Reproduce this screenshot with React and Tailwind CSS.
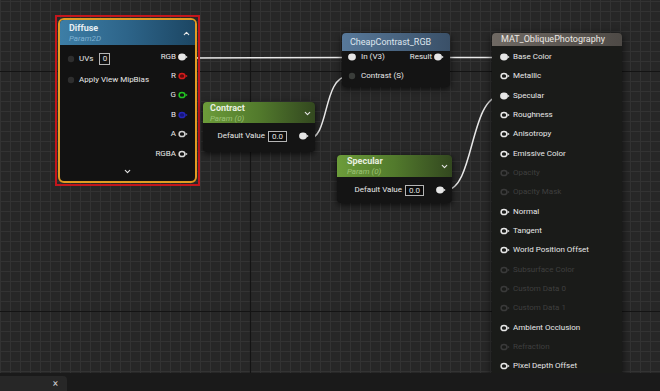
import React from 'react';
import { ChevronUp, ChevronDown } from 'lucide-react';

const FONT = "font-['Roboto','Liberation_Sans',sans-serif]";

// pin glyph: circle + little arrow nub on the right
const Pin = ({ kind = 'ring', color = '#e6e6e6', fill = 'none', nub = true }) => (
  <svg width="10" height="8" viewBox="0 0 10 8" className="shrink-0">
    {kind === 'filled' && <ellipse cx="4" cy="4" rx="3.9" ry="3.4" fill={color} />}
    {kind === 'ring' && <ellipse cx="4" cy="4" rx="2.9" ry="2.6" fill={fill} stroke={color} strokeWidth="1.5" />}
    {kind === 'dot' && <circle cx="4" cy="4" r="3.2" fill={color} />}
    {nub && <path d="M7.6 2.4 L9.6 4 L7.6 5.6 Z" fill={color} />}
  </svg>
);

const MAT_PINS = [
  ['Base Color', 'filled'], ['Metallic', 'ring'], ['Specular', 'filled'], ['Roughness', 'ring'],
  ['Anisotropy', 'ring'], ['Emissive Color', 'ring'], ['Opacity', 'dim'], ['Opacity Mask', 'dim'],
  ['Normal', 'ring'], ['Tangent', 'ring'], ['World Position Offset', 'ring'], ['Subsurface Color', 'dim'],
  ['Custom Data 0', 'dim'], ['Custom Data 1', 'dim'], ['Ambient Occlusion', 'ring'], ['Refraction', 'dim'],
  ['Pixel Depth Offset', 'ring'],
];

const DIFFUSE_OUT = [
  ['RGB', { kind: 'filled' }],
  ['R', { kind: 'ring', color: '#d41b1b', fill: '#5c0c0c' }],
  ['G', { kind: 'ring', color: '#22c422' }],
  ['B', { kind: 'ring', color: '#2525b8', fill: '#16167a' }],
  ['A', { kind: 'ring', color: '#cfcfcf' }],
  ['RGBA', { kind: 'ring', color: '#d8d8d8' }],
];

const ValueBox = ({ children }) => (
  <div className="w-[19px] h-[11px] border border-[#b5b5b5] bg-[#0c0c0c] text-[8px] leading-[9px] text-[#e0e0e0] text-center">{children}</div>
);

const ParamNode = ({ pos, title, headerH, titlePad }) => (
  <div className={`absolute ${pos} rounded-[4px] overflow-hidden bg-[#141414] shadow-[0_2px_6px_rgba(0,0,0,0.7)] flex flex-col`}>
    <div className={`${headerH} ${titlePad} relative bg-linear-to-r from-[#6c9c3a] via-[#527a2c] to-[#33481f]`}>
      <div className="text-[9px] font-bold leading-[11px] text-[#e9f0e0]">{title}</div>
      <div className="text-[8px] italic leading-[10px] text-[#9cc276]">Param (0)</div>
      <ChevronDown size={9} strokeWidth={3} className="absolute right-[3px] top-[7px] text-[#e6e6e6]" />
    </div>
    <div className="flex items-center justify-end gap-[3px] pr-[6px] pt-[5px]">
      <span className="text-[8px] leading-[16px] text-[#e8e8e8]">Default Value</span>
      <ValueBox>0.0</ValueBox>
      <div className="w-[6px]" />
      <Pin kind="filled" />
    </div>
  </div>
);

export default function App() {
  const minor = [];
  for (let i = 0; i <= 66; i++) minor.push(<line key={'v' + i} x1={i * 10 + 0.5} y1="0" x2={i * 10 + 0.5} y2="391" />);
  for (let i = 0; i <= 40; i++) minor.push(<line key={'h' + i} x1="0" y1={i * 10 + 1.5} x2="660" y2={i * 10 + 1.5} />);

  return (
    <div className={`w-[660px] h-[391px] bg-[#181818] overflow-hidden flex flex-col ${FONT}`}>
      <div className="relative h-[373px] overflow-hidden bg-[#272727]">
        <svg className="absolute inset-0" width="660" height="373">
          <g stroke="#333333" strokeWidth="1">{minor}</g>
          <g stroke="#141414" strokeWidth="1.2">
            <line x1="0" y1="71.5" x2="660" y2="71.5" />
            <line x1="0" y1="311.5" x2="660" y2="311.5" />
            <line x1="250.5" y1="0" x2="250.5" y2="373" />
          </g>
        </svg>

        {/* wires */}
        <svg className="absolute inset-0 z-10 pointer-events-none" width="660" height="373" fill="none" stroke="#e8e8e8" strokeWidth="1.5">
          <path d="M188 58 L349 57.5" />
          <path d="M444 57.5 L501 57.5" />
          <path d="M308 139 C 330 139 322 76 349 76" />
          <path d="M446 190 C 474 190 470 96 501 96" />
        </svg>

        {/* Diffuse (selected) */}
        <div className="absolute left-[55px] top-[15px] w-[145px] h-[171px] border-2 border-[#c3161c] p-px z-20">
          <div className="h-full rounded-[6px] border-2 border-[#e29c22] overflow-hidden bg-[#121212] flex flex-col">
            <div className="h-[25px] relative pl-[9px] pt-[3px] bg-linear-to-r from-[#3d7ea6] via-[#2d6489] to-[#1c4663]">
              <div className="text-[9px] font-bold leading-[11px] text-[#e6eef3]">Diffuse</div>
              <div className="text-[8px] italic leading-[10px] text-[#7fb2d3]">Param2D</div>
              <ChevronUp size={9} strokeWidth={3} className="absolute right-[4px] top-[9px] text-[#e6e6e6]" />
            </div>
            <div className="relative flex-1 flex justify-between">
              <div className="flex flex-col shrink-0 whitespace-nowrap pt-[3px] pl-[7px]">
                <div className="h-[21px] flex items-center gap-[2px]">
                  <Pin kind="dot" color="#2e2e2e" nub={false} />
                  <span className="text-[8px] text-[#e8e8e8]">UVs</span>
                  <div className="ml-[4px] w-[11px] h-[12px] border border-[#b5b5b5] text-[8px] leading-[10px] text-center text-[#e0e0e0]">0</div>
                </div>
                <div className="h-[21px] flex items-center gap-[2px]">
                  <Pin kind="dot" color="#2e2e2e" nub={false} />
                  <span className="text-[8px] text-[#e8e8e8]">Apply View MipBias</span>
                </div>
              </div>
              <div className="flex flex-col items-end pt-[2px] pr-[7px]">
                {DIFFUSE_OUT.map(([label, p]) => (
                  <div key={label} className="h-[19.4px] flex items-center gap-[2px]">
                    <span className="text-[8px] text-[#e8e8e8]">{label}</span>
                    <Pin {...p} />
                  </div>
                ))}
              </div>
              <ChevronDown size={9} strokeWidth={3} className="absolute left-[63px] bottom-[5px] text-[#e6e6e6]" />
            </div>
          </div>
        </div>

        <ParamNode pos="left-[203px] top-[102px] w-[112px] h-[50px] z-20" title="Contract" headerH="h-[21px]" titlePad="pl-[7px] pt-[1px]" />
        <ParamNode pos="left-[337px] top-[155px] w-[115px] h-[48px] z-20" title="Specular" headerH="h-[22px]" titlePad="pl-[10px] pt-[1px]" />

        {/* CheapContrast_RGB */}
        <div className="absolute left-[342px] top-[33px] w-[108px] h-[54px] z-20 rounded-[4px] overflow-hidden bg-[#141414] shadow-[0_2px_6px_rgba(0,0,0,0.7)]">
          <div className="h-[18px] pl-[8px] flex items-center bg-linear-to-r from-[#58799a] to-[#3a5068]">
            <span className="text-[9px] leading-[11px] text-[#dfe6ee]">CheapContrast_RGB</span>
          </div>
          <div className="flex justify-between pr-[6px] pl-[6px]">
            <div className="flex flex-col gap-[7px]">
              <div className="h-[12px] flex items-center gap-[3px]">
                <Pin kind="filled" nub={false} />
                <span className="text-[8px] text-[#e8e8e8]">In (V3)</span>
              </div>
              <div className="h-[12px] flex items-center gap-[3px]">
                <Pin kind="dot" color="#3a3d3a" nub={false} />
                <span className="text-[8px] text-[#e8e8e8]">Contrast (S)</span>
              </div>
            </div>
            <div className="h-[12px] flex items-center gap-[2px]">
              <span className="text-[8px] text-[#e8e8e8]">Result</span>
              <Pin kind="filled" />
            </div>
          </div>
        </div>

        {/* MAT_ObliquePhotography */}
        <div className="absolute left-[492px] top-[33px] w-[130px] h-[360px] z-20 rounded-[4px] overflow-hidden bg-[#1a1b19] shadow-[0_2px_8px_rgba(0,0,0,0.7)]">
          <div className="h-[13px] pl-[9px] flex items-center bg-linear-to-r from-[#6f6963] to-[#4e4a46]">
            <span className="text-[9px] leading-[11px] text-[#ece8e4]">MAT_ObliquePhotography</span>
          </div>
          <div className="flex flex-col pt-[1.3px] pl-[8px]">
            {MAT_PINS.map(([label, k]) => (
              <div key={label} className="h-[19.35px] flex items-center gap-[3px]">
                {k === 'dim'
                  ? <Pin kind="ring" color="#3a3a3a" />
                  : <Pin kind={k} />}
                <span className={`text-[8px] ${k === 'dim' ? 'text-[#3f3f3f]' : 'text-[#e8e8e8]'}`}>{label}</span>
              </div>
            ))}
          </div>
        </div>
      </div>

      {/* bottom tab strip */}
      <div className="h-[18px] flex items-end bg-[#1a1a1a]">
        <div className="w-[67px] h-[15px] rounded-tr-[4px] bg-[#272727] flex items-center justify-end pr-[9px]">
          <span className="text-[10px] leading-[10px] text-[#cfcfcf]">×</span>
        </div>
      </div>
    </div>
  );
}
